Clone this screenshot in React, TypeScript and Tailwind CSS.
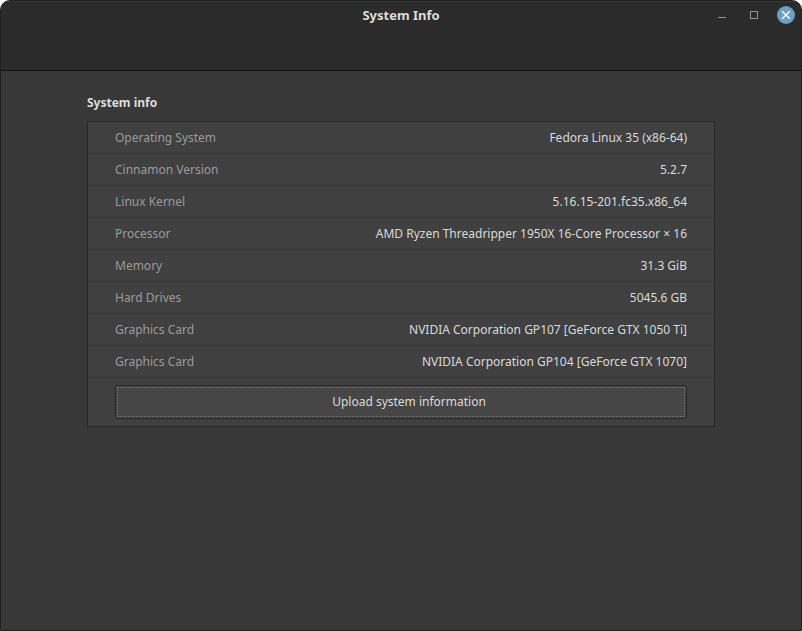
import React from 'react';

type InfoRow = {
  label: string;
  value: string;
};

const rows: InfoRow[] = [
  { label: 'Operating System', value: 'Fedora Linux 35 (x86-64)' },
  { label: 'Cinnamon Version', value: '5.2.7' },
  { label: 'Linux Kernel', value: '5.16.15-201.fc35.x86_64' },
  { label: 'Processor', value: 'AMD Ryzen Threadripper 1950X 16-Core Processor × 16' },
  { label: 'Memory', value: '31.3 GiB' },
  { label: 'Hard Drives', value: '5045.6 GB' },
  { label: 'Graphics Card', value: 'NVIDIA Corporation GP107 [GeForce GTX 1050 Ti]' },
  { label: 'Graphics Card', value: 'NVIDIA Corporation GP104 [GeForce GTX 1070]' },
];

const TitleBar: React.FC = () => {
  return (
    <header className="border-b border-[#121212] bg-[#2b2b2b] pb-[42px]">
      <div className="grid h-[27px] grid-cols-[1fr_auto_1fr] items-center border-t border-[#383838] px-1.5">
        <h1 className="col-start-2 text-[13px] leading-5 font-bold text-[#dcdcdc]">System Info</h1>
        <div className="flex items-center justify-end gap-3.5">
          <button type="button" aria-label="Minimize" className="text-[#939393]">
            <svg width="18" height="18" viewBox="0 0 18 18" className="block">
              <path d="M5 11.5h8" stroke="currentColor" />
            </svg>
          </button>
          <button type="button" aria-label="Maximize" className="text-[#939393]">
            <svg width="18" height="18" viewBox="0 0 18 18" className="block">
              <rect x="5.5" y="5.5" width="7" height="7" fill="none" stroke="currentColor" />
            </svg>
          </button>
          <button type="button" aria-label="Close" className="text-white">
            <svg width="18" height="18" viewBox="0 0 18 18" className="block">
              <circle cx="9" cy="9" r="9" fill="#6ba0c1" />
              <path d="M5.2 5.2l7.6 7.6M12.8 5.2l-7.6 7.6" stroke="currentColor" strokeWidth="1.4" />
            </svg>
          </button>
        </div>
      </div>
    </header>
  );
};

export default function App() {
  return (
    <div className="flex min-h-screen flex-col bg-white font-['Noto_Sans',sans-serif]">
      <div className="flex grow flex-col overflow-hidden rounded-t-[10px] border border-[#202020] bg-[#383838]">
        <TitleBar />
        <main className="px-[86px] pt-[22px] pb-8">
          <h2 className="mb-2 text-xs leading-5 font-bold text-[#dcdcdc]">System info</h2>
          <section className="border border-[#272727] bg-[#404040] text-xs text-[#dadada]">
            <table className="w-full border-separate border-spacing-0">
              <tbody>
                {rows.map(({ label, value }, index) => (
                  <tr key={index}>
                    <th
                      scope="row"
                      className="h-8 border-b border-[#393939] pl-[27px] text-left font-normal text-[#9b9b9b]"
                    >
                      {label}
                    </th>
                    <td className="h-8 border-b border-[#393939] pr-[27px] text-right">{value}</td>
                  </tr>
                ))}
              </tbody>
            </table>
            <div className="px-[27px] py-[7px]">
              <button
                type="button"
                className="block w-full rounded-[3px] border border-[#272727] bg-[#464646] p-px leading-4"
              >
                <span className="block border border-dotted border-[#707070] py-1.5 pl-4">
                  Upload system information
                </span>
              </button>
            </div>
          </section>
        </main>
      </div>
    </div>
  );
}
